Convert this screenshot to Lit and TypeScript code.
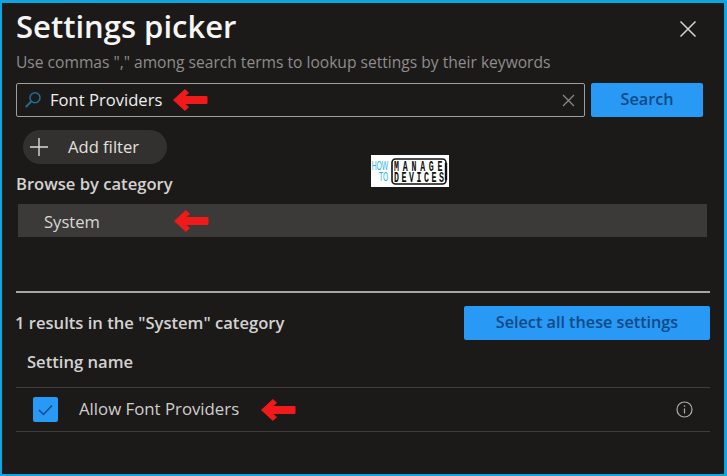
import { LitElement, html, css } from "lit";
import { customElement } from "lit/decorators.js";

const arrow = html`<svg class="arrow" width="36" height="24" viewBox="0 0 36 24">
  <path d="M1.5 12 L13 1.5 L16.5 5 L12 8.5 H35 V15.5 H12 L16.5 19 L13 22.5 Z" fill="#f01a1a" stroke="#f01a1a" stroke-width="1" stroke-linejoin="round"/>
</svg>`;

@customElement("app-root")
export class AppRoot extends LitElement {
  static styles = css`
    :host {
      display: block;
      width: 727px;
      height: 476px;
      box-sizing: border-box;
      background: #0ea5e0;
      padding: 3px 3px 2px 2px;
      font-family: "Open Sans", "Noto Sans", sans-serif;
      overflow: hidden;
    }
    .panel {
      position: relative;
      box-sizing: border-box;
      height: 471px;
      background: #1b1a19;
      padding: 0 14px 0 14px;
      display: flex;
      flex-direction: column;
      color: #e6e4e2;
    }
    .head {
      display: flex;
      justify-content: space-between;
      align-items: center;
      height: 48px;
    }
    h1 {
      margin: -2px 0 0;
      font-size: 31px;
      line-height: 48px;
      font-weight: 600;
      color: #f6f5f4;
      letter-spacing: 0;
      white-space: nowrap;
    }
    .close {
      margin-right: 13px;
      margin-top: 4px;
      display: block;
    }
    .sub {
      font-size: 15.6px;
      line-height: 20px;
      color: #8f8d8b;
      margin-top: 1px;
      white-space: nowrap;
    }
    .search-row {
      display: flex;
      gap: 6px;
      margin-top: 11px;
      height: 34px;
    }
    .search {
      box-sizing: border-box;
      width: 569px;
      height: 34px;
      border: 1px solid #a09e9c;
      border-radius: 2px;
      display: flex;
      align-items: center;
      padding: 0 9px 0 7px;
      font-size: 16.6px;
      color: #f0efee;
    }
    .search .glass { margin-right: 8px; flex: none; }
    .search .q { margin: -2px 10px 0 0; }
    .search .clear { margin-left: auto; }
    .btn {
      background: #2899f5;
      color: #0f4a86;
      border-radius: 2px;
      font-size: 16.2px;
      font-weight: 600;
      display: flex;
      align-items: center;
      justify-content: center;
      height: 34px;
      padding-bottom: 2px;
      box-sizing: border-box;
      white-space: nowrap;
    }
    .btn.s { width: 112px; }
    .btn.all { width: 246px; }
    .pill {
      margin: 13px 0 0 7px;
      width: 144px;
      height: 34px;
      border-radius: 17px;
      background: #323130;
      display: flex;
      align-items: center;
      font-size: 16.6px;
      color: #e2e0de;
      box-sizing: border-box;
      padding-left: 7px;
      gap: 20px;
    }
    .pill span { margin-top: -2px; }
    .label {
      font-size: 16.6px;
      font-weight: 600;
      line-height: 20px;
      color: #d4d2d0;
      white-space: nowrap;
    }
    .browse { margin-top: 10px; }
    .cat {
      margin: 10px 3px 0 2px;
      height: 33px;
      background: #3b3a39;
      display: flex;
      align-items: center;
      padding-left: 26px;
      font-size: 16.6px;
      color: #d8d6d4;
    }
    .cat .name { width: 129px; margin-top: 2px; }
    .divider {
      margin-top: 54px;
      height: 2px;
      background: #a8a6a4;
    }
    .results {
      margin-top: 13px;
      display: flex;
      justify-content: space-between;
      align-items: center;
      height: 34px;
    }
    .results .label { margin-left: -1px; }
    .th {
      margin: 11px 0 0 11px;
      height: 35px;
      line-height: 22px;
    }
    .row {
      border-top: 1px solid #3f3e3d;
      border-bottom: 1px solid #3f3e3d;
      height: 43px;
      margin-top: 1px;
      display: flex;
      align-items: center;
      padding-left: 17px;
      font-size: 16.8px;
      color: #d0cecc;
    }
    .row .txt { margin-top: -2px; }
    .check {
      width: 25px;
      height: 25px;
      background: #2899f5;
      border-radius: 2px;
      display: flex;
      align-items: center;
      justify-content: center;
      margin-right: 21px;
    }
    .row .arrow { margin-left: 21px; }
    .row .info { margin-left: auto; margin-right: 17px; }
    .logo {
      position: absolute;
      left: 369px;
      top: 152px;
      display: block;
    }
    .logo text { font-family: "Liberation Mono", monospace; font-weight: 700; font-size: 15px; fill: #111; }
    .logo text.how { font-family: "Liberation Sans", sans-serif; font-weight: 400; font-size: 13px; fill: #27b4ea; text-anchor: end; }
  `;

  render() {
    return html`<div class="panel">
      <div class="head">
        <h1>Settings picker</h1>
        <svg class="close" width="18" height="18" viewBox="0 0 18 18"><path d="M1.5 1.5 L16.5 16.5 M16.5 1.5 L1.5 16.5" stroke="#d6d4d2" stroke-width="1.5" fill="none"/></svg>
      </div>
      <div class="sub">Use commas "," among search terms to lookup settings by their keywords</div>
      <div class="search-row">
        <div class="search">
          <svg class="glass" width="18" height="18" viewBox="0 0 18 18"><circle cx="11" cy="6.8" r="5" stroke="#1f6f98" stroke-width="1.5" fill="none"/><path d="M7.2 10.5 L1.8 16" stroke="#1f6f98" stroke-width="1.8" fill="none"/></svg>
          <span class="q">Font Providers</span>
          ${arrow}
          <svg class="clear" width="13" height="13" viewBox="0 0 13 13"><path d="M1 1 L12 12 M12 1 L1 12" stroke="#8a8886" stroke-width="1.3" fill="none"/></svg>
        </div>
        <div class="btn s">Search</div>
      </div>
      <div class="pill">
        <svg width="18" height="18" viewBox="0 0 18 18"><path d="M9 0 V18 M0 9 H18" stroke="#dcdad8" stroke-width="1.4" fill="none"/></svg>
        <span>Add filter</span>
      </div>
      <div class="label browse">Browse by category</div>
      <div class="cat"><span class="name">System</span>${arrow}</div>
      <div class="divider"></div>
      <div class="results">
        <span class="label">1 results in the "System" category</span>
        <div class="btn all">Select all these settings</div>
      </div>
      <div class="label th">Setting name</div>
      <div class="row">
        <div class="check"><svg width="15" height="12" viewBox="0 0 15 12"><path d="M1 6 L5.5 10.5 L14 1.5" stroke="#0f4a86" stroke-width="1.5" fill="none"/></svg></div>
        <span class="txt">Allow Font Providers</span>
        ${arrow}
        <svg class="info" width="17" height="17" viewBox="0 0 17 17"><circle cx="8.5" cy="8.5" r="7.5" stroke="#b0aeac" stroke-width="1.2" fill="none"/><path d="M8.5 7.5 V12.5" stroke="#b0aeac" stroke-width="1.2"/><circle cx="8.5" cy="5" r="0.8" fill="#b0aeac"/></svg>
      </div>
      <svg class="logo" width="78" height="32" viewBox="0 0 78 32">
        <rect width="78" height="32" fill="#fff"/>
        <rect x="21" y="4" width="54" height="25" rx="3.5" fill="none" stroke="#111" stroke-width="1.6"/>
        <path d="M75 8 V25" stroke="#111" stroke-width="2.4"/>
        <text class="how" transform="scale(.52,1)" x="33" y="15.5">HOW</text>
        <text class="how" transform="scale(.52,1)" x="33" y="26">TO</text>
        <text transform="scale(.55,1)" x="42" y="16" letter-spacing="6.8">MANAGE</text>
        <text transform="scale(.55,1)" x="42" y="27" letter-spacing="4.6">DEVICES</text>
      </svg>
    </div>`;
  }
}
